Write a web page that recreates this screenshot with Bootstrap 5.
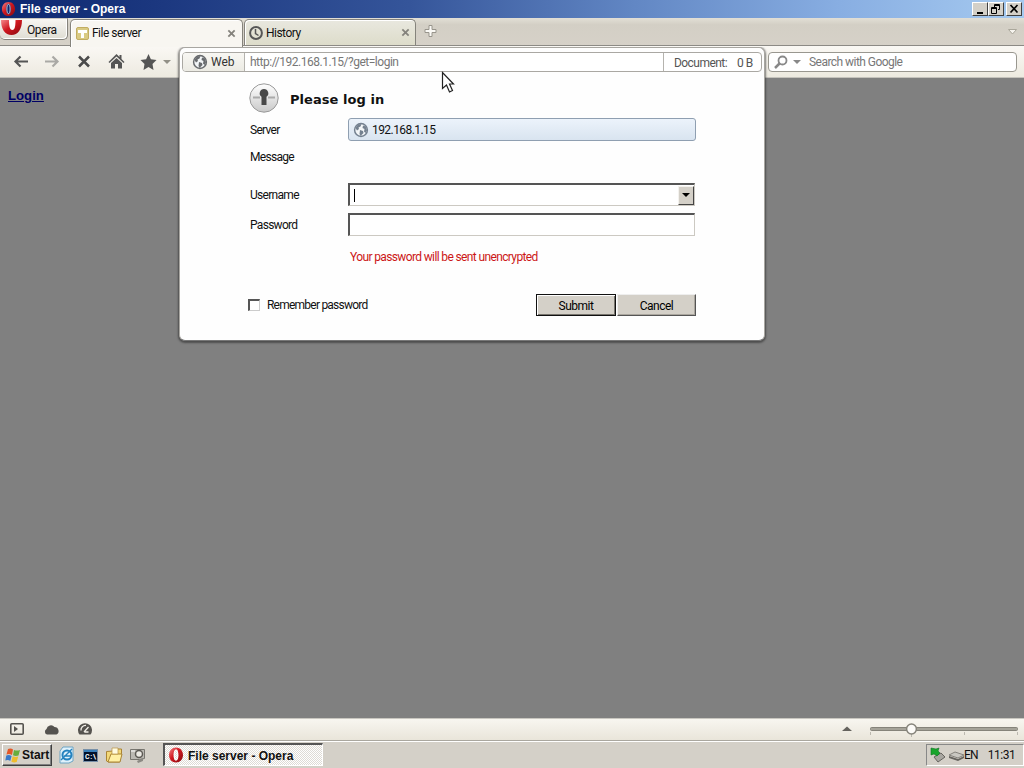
<!DOCTYPE html>
<html lang="en">
<head>
<meta charset="utf-8">
<title>File server - Opera</title>
<link href="https://cdn.jsdelivr.net/npm/bootstrap@5.3.0/dist/css/bootstrap.min.css" rel="stylesheet">
<style>
html,body{height:100%;overflow:hidden}
body{width:1024px;height:768px;font:12px/14px Roboto,"Liberation Sans",Arial,sans-serif;color:#111;background:#808080}
b{font-size:12px;font-family:"Liberation Sans",Arial,sans-serif}
svg{display:block;flex:none}
.w-title{height:18px;background:linear-gradient(90deg,#0d2870 0,#1c3880 16%,#35559a 40%,#6287c4 62%,#88aee2 82%,#a6caf0 100%);color:#fff;padding:0 2px 1px 1px}
.w-title b{margin-left:4px}
.win-btn{width:16px;height:14px;background:#d4d0c8;border:1px solid;border-color:#fff #404040 #404040 #fff;padding:0;border-radius:0}
.tabs-bar{height:28px;background:linear-gradient(#e2dfd6 0,#d3cfc5 25%,#d6d1c8 100%);border-bottom:1px solid #8c8a85}
.opera-btn{width:68px;height:22px;background:linear-gradient(#f7f6f2,#dfddd3);border:1px solid #85837c;border-top-color:#c8c5bd;border-left:0;border-radius:0 0 5px 5px;box-shadow:inset -1px -1px #fff}
.opera-btn span{margin-left:4px;letter-spacing:-.4px}
.otab{height:27px;border:1px solid #85837c;border-bottom:0;border-radius:5px 5px 0 0;margin-top:1px;box-shadow:inset 1px 1px #fff}
.otab span{margin-left:3px;letter-spacing:-.52px}
.otab-on{width:173px;height:28px;margin-left:2px;background:#f8f6f1;padding:0 6px 1px 5px;z-index:1}
.otab-off{width:172px;height:26px;margin-left:1px;background:linear-gradient(#e9e8df,#dddcca);padding:0 5px 0 4px}
.tool-bar{height:32px;background:linear-gradient(#faf8f4,#edeae0);border-bottom:1px solid #c5c3bc}
.nav-icons{width:180px;margin-right:-180px;padding-left:13px;gap:15px}
.searchbox{width:249px;height:20px;background:#fff;border:1px solid #99978f;border-radius:4px;color:#777;margin:6px 0 0 768px}
.page{height:640px;background:#808080}
.page a{color:#000065;font-weight:700;font-family:"Liberation Sans",Arial,sans-serif;font-size:13.2px;margin:11px 0 0 8px;display:inline-block}
.status-bar{height:22px;background:linear-gradient(#f8f6f0,#e9e5da);border-top:1px solid #c9c7c0;padding-bottom:2px}
.task-bar{height:28px;background:#d4d0c8;border-top:1px solid #aaa79f;box-shadow:inset 0 1px #fff}
.dlg{position:absolute;left:179px;top:47px;width:586px;height:294px;background:#fefefe;border:1px solid #a8a6a1;border-bottom-color:#777;border-radius:6px;box-shadow:0 1px 2px 1px rgba(45,45,45,.6);padding:4px 2px;z-index:3;clip-path:inset(0 -5px -6px -5px)}
.urlbar{height:20px;border:1px solid #aaa8a3;border-radius:4px;background:#fff;overflow:hidden}
.web-part{width:62px;background:linear-gradient(#f8f7f3,#ecebe4);border-right:1px solid #b5b3ae;padding-left:9px}
.size-part{width:98px;padding:1px 0 0 10px;color:#555;gap:10px;letter-spacing:-.55px;border-left:1px solid #b5b3ae}
.form-part{margin:11px 0 0 66px;width:448px}
.lbl{width:100px;padding-left:2px;letter-spacing:-.7px}
.server-box{width:348px;height:23px;border:1px solid #8f9fb1;border-radius:3px;background:linear-gradient(#ecf3fb,#d9e4f0);padding-left:4px}
.sunk{height:23px;width:347px;background:#fff;border:2px solid;border-color:#555 #ccc9c2 #ccc9c2 #555;border-right-width:1px;border-bottom-width:1px}
.caret{width:1px;height:13px;background:#000;margin-left:4px}
.dd{width:16px;height:19px;background:#d4d0c8;border:1px solid;border-color:#f4f2ee #444 #444 #f4f2ee}
.pbtn{width:79px;height:22px;background:#d4d0c8;border:1px solid;border-color:#eee #555 #555 #eee;box-shadow:inset -1px -1px #aaa69e;border-radius:0;padding:2px 0 0;font-size:12px;line-height:14px;letter-spacing:-.5px}
.pbtn.main{width:80px;border-color:#111;box-shadow:inset 1px 1px #fff,inset -1px -1px #77746d}
.chk{width:12px;height:12px;border:1px solid;border-width:2px 1px 1px 2px;border-color:#555 #ccc #ccc #555}
.start-btn{width:50px;height:22px;border:1px solid;border-color:#fff #404040 #404040 #fff;box-shadow:inset -1px -1px #808080;padding-left:2px}
.task-on{width:160px;height:23px;border:1px solid;border-width:2px 1px 1px 2px;border-color:#555 #fff #fff #555;background:repeating-conic-gradient(#fff 0 25%,#dedbd5 0 50%) 0 0/2px 2px;padding-left:3px}
.tray{width:98px;height:22px;border:1px solid;border-color:#888 #fff #fff #888;padding-left:3px}
.pointer{position:absolute;left:441px;top:71px;z-index:4}
</style>
</head>
<body>
<svg width="0" height="0" class="position-absolute"><defs>
<linearGradient id="red" x2="1" y2="1"><stop stop-color="#f4888a"/><stop offset=".45" stop-color="#d01820"/><stop offset="1" stop-color="#870a10"/></linearGradient>
<symbol id="opera" viewBox="0 0 16 16"><path fill="url(#red)" fill-rule="evenodd" d="M8 .5c4 0 7 3 7 7.500s-3 7.500-7 7.500S1 12.500 1 8 4 .5 8 .5zM8 2.500C6.200 2.500 5.600 5 5.600 8s.6 5.500 2.400 5.500 2.400-2.500 2.400-5.500S9.800 2.500 8 2.500z"/><path fill="none" stroke="#fff" stroke-opacity=".75" d="M8 3C6.800 3 6.300 5 6.300 8s.5 5 1.700 5 1.700-2 1.700-5S9.200 3 8 3z"/></symbol>
<symbol id="globe" viewBox="0 0 16 16"><circle cx="8" cy="8" r="6.400" fill="#f2f5f7" stroke="currentColor" stroke-width="1.500"/><path fill="currentColor" d="M2.500 6l2.500-3.500 3.500-.5-1 2.500-2 1 .5 1.500L4 8.500zM7 8l3 1 .5 2-2 2-.5 1.500L6.500 12zM10 3.500l3 1 1 4-1.500 2.500L11 9.500 11.500 7 9.500 6z"/></symbol>
<symbol id="cross" viewBox="0 0 10 10"><path d="M1.500 1.500l7 7M8.500 1.500l-7 7" stroke="#85837d" stroke-width="2"/></symbol>
</defs></svg>

<header class="w-title d-flex align-items-center">
  <svg width="15" height="16"><use href="#opera"/></svg><b>File server - Opera</b>
  <div class="d-flex ms-auto">
    <button class="win-btn"><svg width="14" height="12"><path d="M4 9h6v2H4z"/></svg></button>
    <button class="win-btn"><svg width="14" height="12" fill="none" stroke="#000"><path d="M5 2.500h6M5.500 4V1.500h5v5H9M3 5.500h5M2.500 4.500h5v6h-5z"/></svg></button>
    <button class="win-btn" style="margin-left:2px"><svg width="14" height="12"><path d="M3.500 2l7 7.500M10.500 2l-7 7.500" stroke="#000" stroke-width="1.700"/></svg></button>
  </div>
</header>

<nav class="tabs-bar d-flex">
  <div class="opera-btn d-flex align-items-start">
    <svg width="23" height="20" viewBox="0 0 23 20"><path fill="url(#red)" d="M1 1h21c0 9-4 15-10.500 15S1 10 1 1z"/><path fill="#fff" d="M9 1h6.500c0 7-1 10-3.200 10S9 8 9 1z"/></svg><span class="pt-1">Opera</span>
  </div>
  <div class="otab otab-on d-flex align-items-center position-relative">
    <svg width="13" height="13"><rect x=".5" y=".5" width="12" height="12" rx="1.500" fill="#d9ca83" stroke="#c2ad62"/><path d="M2 3h9v3H8v5H5V6H2z" fill="#fff"/></svg><span>File server</span>
    <svg class="ms-auto" width="9" height="9"><use href="#cross"/></svg>
  </div>
  <div class="otab otab-off d-flex align-items-center">
    <svg width="14" height="14" fill="none" stroke="#565656"><circle cx="7" cy="7" r="5.900" stroke-width="2"/><path d="M6.500 3v4.500l3 2" stroke-width="1.500"/></svg><span>History</span>
    <svg class="ms-auto" width="9" height="9"><use href="#cross"/></svg>
  </div>
  <svg width="15" height="15" style="margin:6px 0 0 7px"><path d="M6 1.500h3v4h4v3H9v4H6v-4H2v-3h4z" fill="#faf9f5" stroke="#98958c"/></svg>
  <svg class="ms-auto" width="12" height="9" style="margin:10px 5px 0 0"><path d="M1.500 1.500h8L5.500 6z" fill="#f6f4ee" stroke="#aaa79b"/></svg>
</nav>

<div class="tool-bar d-flex">
  <div class="nav-icons d-flex align-items-center">
    <svg width="16" height="15" fill="none" stroke="#555" stroke-width="2.200"><path d="M15 7.500H3M7.500 2.500l-5 5 5 5"/></svg>
    <svg width="16" height="15" fill="none" stroke="#aaa9a5" stroke-width="2.200"><path d="M1 7.500h12M8.500 2.500l5 5-5 5"/></svg>
    <svg width="18" height="15" fill="none" stroke="#4b4b4b" stroke-width="2.500"><path d="M4 2.500l10 10M14 2.500l-10 10"/></svg>
    <svg width="17" height="15" fill="#555"><path d="M8.500 0l3 3V1h2v4l3 3-1 1-7-6.500-7 6.500-1-1zM8.500 4L14 9v5.500h-4V10H7v4.500H3V9z"/></svg>
    <svg width="32" height="16" viewBox="0 0 32 16"><path fill="#555" d="M8.500 0l2.400 5.200 5.600.8-4 4 1 6-5-3-5 3 1-6-4-4 5.600-.8z"/><path fill="#929087" d="M23 6h8l-4 4z"/></svg>
  </div>
  <div class="searchbox d-flex align-items-center">
    <svg width="33" height="16"><circle cx="13.500" cy="6.500" r="4" fill="none" stroke="#888" stroke-width="1.800"/><path d="M10.500 9.500l-4.500 4.500" stroke="#888" stroke-width="2.500"/><path d="M24 6h8l-4 4z" fill="#888"/></svg>
    <span style="margin-left:7px;letter-spacing:-.54px">Search with Google</span>
  </div>
</div>

<main class="page"><a href="#">Login</a></main>

<footer class="status-bar d-flex align-items-center">
  <svg width="100" height="16" fill="#55534f"><rect x="10.800" y="2.800" width="12.400" height="10.400" rx="1" fill="none" stroke="#55534f" stroke-width="1.600"/><path d="M14 5l4 3-4 3z"/><path d="M47 13.500a3 3 0 01-.5-5.500 4.500 4.500 0 018-2 4 4 0 012 7.500z"/><path d="M79.500 13.500a7 7 0 1111 0z"/><path d="M81 9.500a4.500 4.500 0 015-5M84 11l4.500-5M84.500 11h4" stroke="#f2efe8" stroke-width="1.300" fill="none"/></svg>
  <svg class="ms-auto" width="184" height="18"><path d="M2 11h10L7 6.500z" fill="#65635e"/><rect x="30.500" y="7.500" width="147" height="3" rx="1" fill="#a5a399" stroke="#85837a"/><path d="M30.500 12v3M124.500 12v3M177.500 12v3M71.500 14v3" stroke="#bbb8af"/><circle cx="71.500" cy="9" r="4.900" fill="#fbfaf7" stroke="#85837a" stroke-width="1.500"/></svg>
</footer>

<footer class="task-bar d-flex align-items-center">
  <div class="start-btn d-flex align-items-center" style="margin-left:2px">
    <svg width="16" height="16"><path fill="#e45828" d="M3 2q3-1 5 .5L7 8Q4.500 6.500 1.500 7.500z"/><path fill="#68ad3d" d="M9 3q3 1 6 0l-1.500 5.500q-3 1-5.500-.2z"/><path fill="#397ac9" d="M1.300 8.500Q4 7.500 6.600 9L5.300 14q-2-1.500-5-.5z"/><path fill="#efbd2d" d="M7.700 9.300q3 1.200 5.500.2L11.700 15q-2.700 1-5.300-.3z"/></svg><b style="margin-left:1px;letter-spacing:-.05px">Start</b>
  </div>
  <svg width="98" height="20" style="margin-left:6px">
    <path d="M5 2h10v14l-4 2H2V6z" fill="#dff1fb" stroke="#6da4c4"/><circle cx="9" cy="10" r="4.500" fill="none" stroke="#2482bf" stroke-width="2"/><path d="M6 11h7M3 15L14 4" stroke="#2482bf" stroke-width="1.400"/>
    <rect x="25.500" y="4.500" width="14" height="12" fill="#02122b" stroke="#7890a8"/><path d="M26 5h13v2H26z" fill="#397fb9"/><text x="27" y="14" font-size="7" font-weight="700" textLength="11" fill="#fff">C:\</text>
    <path d="M48.500 6.500V16l2 1h11l2-9V4h-6l-2 2z" fill="#f2d878" stroke="#aa8434"/><path d="M50 17l3-8h11l-2 8z" fill="#fff0a4" stroke="#aa8434"/><path d="M54 3h6v6h-6z" fill="#fffbe0" stroke="#b89446" stroke-width=".7"/>
    <path d="M72.500 4.500h14v9l-5 1h-9z" fill="#bbb9b3" stroke="#77756f"/><path d="M79 16l6-3v3l-5 2z" fill="#8b8983"/><circle cx="81" cy="9" r="3.500" fill="#eceae4" stroke="#5c5a55" stroke-width="1.500"/><path d="M73 6h4" stroke="#fff"/>
  </svg>
  <div class="task-on d-flex align-items-center" style="margin-left:7px"><svg width="16" height="16"><use href="#opera"/></svg><b style="margin:1px 0 0 4px">File server - Opera</b></div>
  <div class="tray d-flex align-items-center ms-auto">
    <svg width="35" height="18"><path d="M4 11l7-4 4 4-7 5z" fill="#a8a6a0" stroke="#66645f"/><path d="M1 2l5 1 3-1-1 3 2 2-3 3-3-2-3 1z" fill="#18a52c" stroke="#117222" stroke-width=".6"/><path d="M19 9l6-3 9 3-6 3z" fill="#c9c7c1" stroke="#85837d"/><path d="M19 10l9 3 6-3v2l-6 3-9-3z" fill="#65635e"/></svg>
    <span style="margin-left:-1px;letter-spacing:-.8px">EN</span><span style="margin-left:10px;letter-spacing:-.45px">11:31</span>
  </div>
</footer>

<section class="dlg">
  <div class="urlbar d-flex align-items-stretch">
    <div class="web-part d-flex align-items-center"><svg width="16" height="16" color="#686b6e"><use href="#globe"/></svg><span style="margin-left:3px;color:#333">Web</span></div>
    <div class="flex-fill d-flex align-items-center" style="padding-left:5px;color:#777;letter-spacing:-.49px">http://192.168.1.15/?get=login</div>
    <div class="size-part d-flex align-items-center"><span>Document:</span><span>0 B</span></div>
  </div>
  <form class="form-part">
    <div class="d-flex align-items-center" style="height:30px">
      <svg width="32" height="30" style="margin-left:1px"><defs><linearGradient id="lk" x2="0" y2="1"><stop stop-color="#fff"/><stop offset="1" stop-color="#c9c9c9"/></linearGradient></defs><circle cx="15" cy="15" r="14.200" fill="url(#lk)" stroke="#999"/><path d="M4 14.500h7M19 14.500h7" stroke="#aaa" stroke-width="2"/><path d="M15 6a4.300 4.300 0 012.500 7.800V22h-5v-8.200A4.300 4.300 0 0115 6z" fill="#484848"/></svg>
      <b style="font-family:'DejaVu Sans',sans-serif;font-size:13px;letter-spacing:.05px;margin:4px 0 0 9px">Please log in</b>
    </div>
    <div class="d-flex align-items-center" style="margin-top:5px;height:23px"><span class="lbl">Server</span><div class="server-box d-flex align-items-center"><svg width="16" height="16" color="#748190"><use href="#globe"/></svg><span style="margin-left:3px;letter-spacing:-.56px">192.168.1.15</span></div></div>
    <div class="lbl" style="margin-top:9px">Message</div>
    <div class="d-flex align-items-center" style="margin-top:19px"><span class="lbl">Username</span><div class="sunk d-flex align-items-center"><i class="caret"></i><div class="dd ms-auto"><svg width="14" height="17"><path d="M3 6h8L7 10z"/></svg></div></div></div>
    <div class="d-flex align-items-center" style="margin-top:7px"><span class="lbl">Password</span><div class="sunk"></div></div>
    <div style="margin:14px 0 0 102px;color:#cc1717;letter-spacing:-.63px">Your password will be sent unencrypted</div>
    <div class="d-flex align-items-center" style="margin-top:30px;height:22px"><i class="chk"></i><span style="margin-left:7px;letter-spacing:-.77px">Remember password</span><button type="button" class="pbtn main ms-auto">Submit</button><button type="button" class="pbtn" style="margin-left:1px">Cancel</button></div>
  </form>
</section>
<svg class="pointer" width="16" height="23"><path d="M1.500 1.500v16l4-3.500 3 7 3-1.500-3-6.500h4z" fill="#fff" stroke="#222" stroke-width="1.200"/></svg>
<script src="https://cdn.jsdelivr.net/npm/bootstrap@5.3.0/dist/js/bootstrap.bundle.min.js"></script>
</body>
</html>
